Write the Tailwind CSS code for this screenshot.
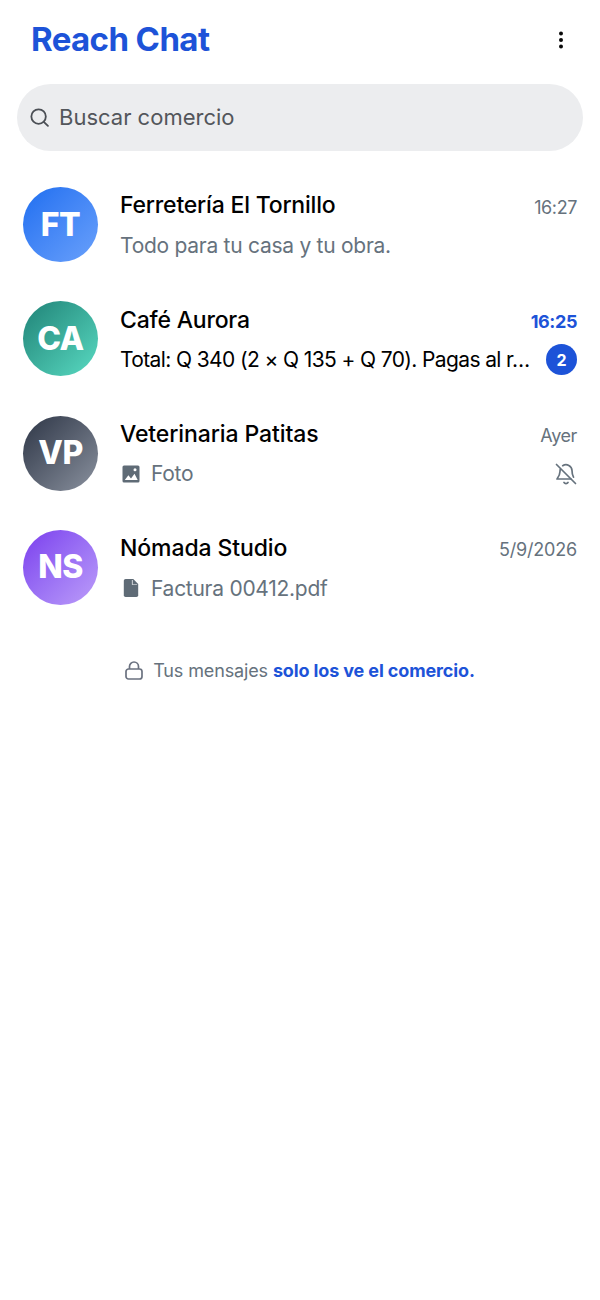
<!DOCTYPE html>
<html lang="es">
<head>
  <meta charset="UTF-8" />
  <meta name="viewport" content="width=device-width, initial-scale=1.0" />
  <title>Reach Chat</title>
  <script src="https://cdn.jsdelivr.net/npm/@tailwindcss/browser@4"></script>
</head>
<body class="bg-white font-['Inter',sans-serif] text-black">
  <div class="w-[600px] h-[1300px] overflow-hidden">
    <header class="h-[84px] flex items-center justify-between pl-[31px] pr-[27px] pb-[5px]">
      <h1 class="text-[33px] font-bold tracking-[-0.6px] text-[#1d53d8]">Reach Chat</h1>
      <svg class="w-[24px] h-[24px]" viewBox="0 0 24 24" fill="#0a0a0a"><circle cx="12" cy="5.5" r="2"/><circle cx="12" cy="12" r="2"/><circle cx="12" cy="18.5" r="2"/></svg>
    </header>

    <div class="mx-[17px] h-[67px] rounded-full bg-[#eceDef] flex items-center pl-[13px] gap-[10px]">
      <svg class="w-[19px] h-[19px]" viewBox="0 0 21 21" fill="none" stroke="#4b4f55" stroke-width="2" stroke-linecap="round"><circle cx="9.500" cy="9.500" r="8"/><path d="M15.500 15.500l4.300 4.300"/></svg>
      <span class="text-[22px] text-[#53565b]">Buscar comercio</span>
    </div>

    <ul class="mt-[36px] px-[23px] flex flex-col gap-[39.33px]">
      <li class="flex gap-[22px] h-[75px]">
        <div class="w-[75px] h-[75px] shrink-0 rounded-full bg-linear-to-br from-[#1d6ef0] to-[#69a0fb] flex items-center justify-center text-white text-[32px] font-extrabold tracking-[-0.5px]">FT</div>
        <div class="flex-1 min-w-0 flex flex-col">
          <div class="h-[36px] shrink-0 pt-[1px] flex items-center justify-between">
            <span class="text-[23px] font-medium tracking-[-0.2px]">Ferretería El Tornillo</span>
            <span class="pt-[3px] text-[18px] tracking-[-0.4px] text-[#66727d]">16:27</span>
          </div>
          <div class="h-[45px] shrink-0 flex items-center justify-between">
            <span class="text-[21px] tracking-[-0.27px] text-[#66727d]">Todo para tu casa y tu obra.</span>
          </div>
        </div>
      </li>
      <li class="flex gap-[22px] h-[75px]">
        <div class="w-[75px] h-[75px] shrink-0 rounded-full bg-linear-to-br from-[#1f8377] to-[#59dbc2] flex items-center justify-center text-white text-[32px] font-extrabold tracking-[-0.5px]">CA</div>
        <div class="flex-1 min-w-0 flex flex-col">
          <div class="h-[36px] shrink-0 pt-[1px] flex items-center justify-between">
            <span class="text-[23px] font-medium tracking-[-0.2px]">Café Aurora</span>
            <span class="pt-[3px] text-[18px] font-bold tracking-[-0.4px] text-[#1d53d8]">16:25</span>
          </div>
          <div class="h-[45px] shrink-0 flex items-center justify-between">
            <span class="whitespace-nowrap text-[21px] tracking-[-0.62px]">Total: Q 340 (2 × Q 135 + Q 70). Pagas al r…</span>
            <span class="w-[31px] h-[31px] shrink-0 rounded-full bg-[#1d53d8] text-white text-[16px] font-bold flex items-center justify-center">2</span>
          </div>
        </div>
      </li>
      <li class="flex gap-[22px] h-[75px]">
        <div class="w-[75px] h-[75px] shrink-0 rounded-full bg-linear-to-br from-[#2f3747] to-[#8b929f] flex items-center justify-center text-white text-[32px] font-extrabold tracking-[-0.5px]">VP</div>
        <div class="flex-1 min-w-0 flex flex-col">
          <div class="h-[36px] shrink-0 pt-[1px] flex items-center justify-between">
            <span class="text-[23px] font-medium tracking-[-0.1px]">Veterinaria Patitas</span>
            <span class="pt-[3px] text-[18px] tracking-[-0.4px] text-[#66727d]">Ayer</span>
          </div>
          <div class="h-[45px] shrink-0 flex items-center justify-between">
            <span class="flex items-center text-[21px] tracking-[-0.27px] text-[#66727d]">
              <svg class="w-[18px] h-[18px] ml-[2px] mr-[11px]" viewBox="0 0 18 18" fill="#5f6b76"><path d="M2 .5h14a1.500 1.500 0 0 1 1.500 1.500v14a1.500 1.500 0 0 1-1.500 1.500H2A1.500 1.500 0 0 1 .5 16V2A1.500 1.500 0 0 1 2 .5z"/><path fill="#fff" d="M2.800 15l3.600-4.700 2.600 3.100 3.500-4.600 3.200 6.200z"/><circle cx="13" cy="4.800" r="1.500" fill="#fff"/></svg>
              Foto
            </span>
            <svg class="w-[24px] h-[24px] mr-[-1px]" viewBox="0 0 24 24" fill="none" stroke="#66727d" stroke-width="1.700" stroke-linecap="round" stroke-linejoin="round"><path d="M8.700 3.700A6 6 0 0 1 18 8.600c0 3 .7 5.200 1.500 6.600"/><path d="M6.300 7.300C6.100 8 6 8.700 6 9.500c0 3.500-1.300 5.300-3 7.500h14"/><path d="M10 20.500a2.400 2.400 0 0 0 4 0"/><path d="M2.500 2.500l19 19"/></svg>
          </div>
        </div>
      </li>
      <li class="flex gap-[22px] h-[75px]">
        <div class="w-[75px] h-[75px] shrink-0 rounded-full bg-linear-to-br from-[#7c3aed] to-[#bd9cf9] flex items-center justify-center text-white text-[32px] font-extrabold tracking-[-0.5px]">NS</div>
        <div class="flex-1 min-w-0 flex flex-col">
          <div class="h-[36px] shrink-0 pt-[1px] flex items-center justify-between">
            <span class="text-[23px] font-medium tracking-[-0.1px]">Nómada Studio</span>
            <span class="pt-[3px] text-[18px] tracking-[-0.2px] text-[#66727d]">5/9/2026</span>
          </div>
          <div class="h-[45px] shrink-0 flex items-center justify-between">
            <span class="flex items-center text-[21px] tracking-[-0.27px] text-[#66727d]">
              <svg class="w-[16px] h-[18px] ml-[3px] mr-[12px]" viewBox="0 0 16 20" fill="#5f6b76"><path d="M2 0h8.500L16 5.500V18a2 2 0 0 1-2 2H2a2 2 0 0 1-2-2V2a2 2 0 0 1 2-2z"/><path fill="#fff" d="M9.800 1v4.700h4.900l.3.800H9V1z"/></svg>
              Factura 00412.pdf
            </span>
          </div>
        </div>
      </li>
    </ul>

    <p class="mt-[52px] flex items-center justify-center gap-[10px] text-[18px] tracking-[-0.13px] text-[#66727d]">
      <svg class="w-[18px] h-[19px]" viewBox="0 0 18 19" fill="none" stroke="#6b7280" stroke-width="1.700"><rect x="1" y="8" width="16" height="10" rx="2.500"/><path d="M4.500 8V5.500a4.500 4.500 0 0 1 9 0V8"/></svg>
      <span>Tus mensajes <span class="font-bold text-[#1d53d8]">solo los ve el comercio.</span></span>
    </p>
  </div>
</body>
</html>
